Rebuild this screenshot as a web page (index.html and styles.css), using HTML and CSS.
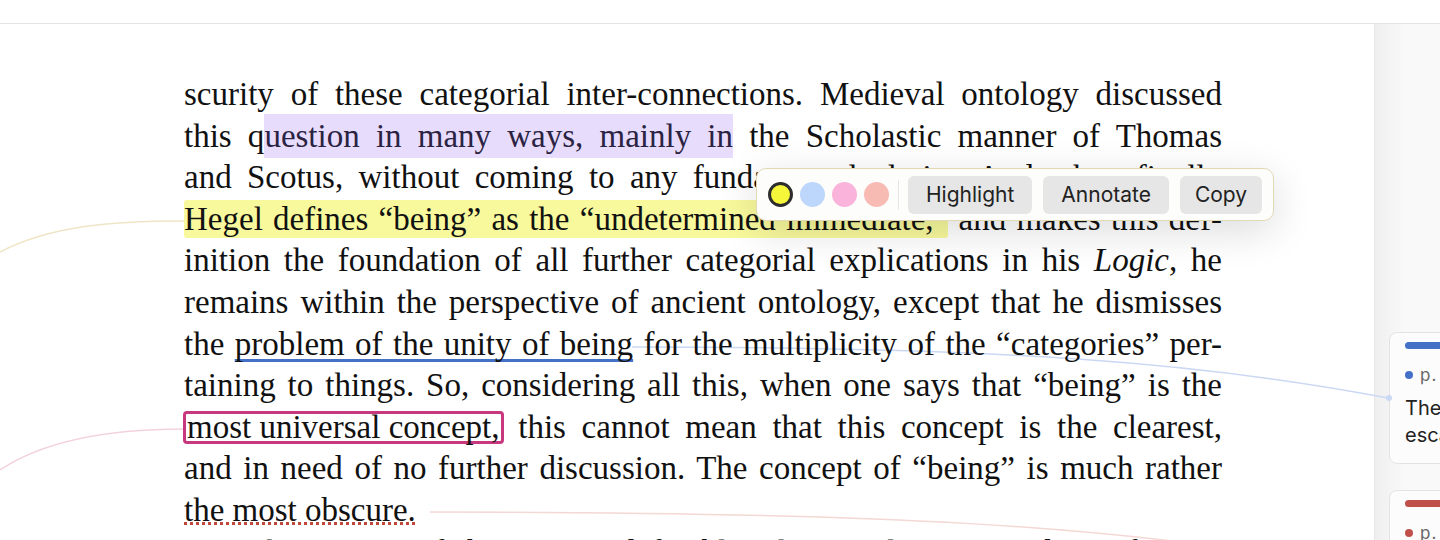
FILE: index.html
```html
<!DOCTYPE html>
<html lang="en">
<head>
    <meta charset="UTF-8">
    <meta name="viewport" content="width=device-width, initial-scale=1.0">
    <title>Reader</title>
    <link rel="stylesheet" href="styles.css">
</head>
<body>
    <div class="topbar"></div>

    <div class="workspace">
        <main class="reader">
            <div class="page">
                <p class="text">
                    <span class="ln">scurity of these categorial inter-connections. Medieval ontology discussed</span>
                    <span class="ln">this q<span class="hl-lavender">uestion in many ways, mainly in</span> the Scholastic manner of Thomas</span>
                    <span class="ln">and Scotus, without coming to any fundamental clarity. And when finally</span>
                    <span class="ln"><span class="hl-yellow">Hegel defines “being” as the “undetermined immediate,”</span> and makes this def-</span>
                    <span class="ln">inition the foundation of all further categorial explications in his <i>Logic</i>, he</span>
                    <span class="ln">remains within the perspective of ancient ontology, except that he dismisses</span>
                    <span class="ln">the <span class="ul-blue">problem of the unity of being</span> for the multiplicity of the “categories” per-</span>
                    <span class="ln">taining to things. So, considering all this, when one says that “being” is the</span>
                    <span class="ln"><span class="box-pink">most universal concept,</span> this cannot mean that this concept is the clearest,</span>
                    <span class="ln">and in need of no further discussion. The concept of “being” is much rather</span>
                    <span class="ln last"><span class="ul-dotted">the most obscure.</span></span>
                    <span class="ln indent">2. The concept of “being” is indefinable. This conclusion was drawn from its</span>
                </p>
            </div>

            <div class="popup">
                <div class="swatches">
                    <span class="swatch yellow active"></span>
                    <span class="swatch blue"></span>
                    <span class="swatch pink"></span>
                    <span class="swatch salmon"></span>
                </div>
                <span class="divider"></span>
                <button class="tool">Highlight</button>
                <button class="tool">Annotate</button>
                <button class="tool">Copy</button>
            </div>
        </main>

        <aside class="notes">
            <div class="note blue">
                <div class="bar"></div>
                <div class="meta"><span class="dot"></span>p. 3</div>
                <div class="body">The unity of being<br>escapes the categories</div>
            </div>
            <div class="note red">
                <div class="bar"></div>
                <div class="meta"><span class="dot"></span>p. 3</div>
            </div>
        </aside>
    </div>

    <!-- connectors from marks to margin notes -->
    <svg class="links" width="1440" height="540" viewBox="0 0 1440 540">
        <path d="M184 221 C110 221 50 226 0 252" stroke="#efe5c6"/>
        <path d="M184 429 C110 429 45 440 0 470" stroke="#f3d2df"/>
        <path d="M632 347 C1000 347 1200 362 1388 398" stroke="#cad8f4"/>
        <circle cx="1389" cy="398" r="3" fill="#cad8f4"/>
        <path d="M430 512 C850 512 1130 522 1389 575" stroke="#f3d8d4"/>
    </svg>
</body>
</html>
```

FILE: styles.css
```css
* {
    margin: 0;
    padding: 0;
    box-sizing: border-box;
}

body {
    width: 1440px;
    height: 540px;
    overflow: hidden;
    background: #ffffff;
    color: #111;
    font-family: 'Liberation Serif', serif;
    position: relative;
}

.topbar {
    height: 24px;
    border-bottom: 1px solid #e4e4e4;
    background: #ffffff;
}

.workspace {
    display: flex;
    height: 516px;
}

.reader {
    flex: 1;
    position: relative;
}

.page {
    position: relative;
    z-index: 1;
    padding: 50px 0 0 184px;
}

.text {
    width: 1038px;
    font-size: 33px;
    line-height: 41.6px;
}

.ln {
    display: block;
    height: 41.6px;
    text-align: justify;
    text-align-last: justify;
    white-space: nowrap;
}

.ln.last {
    text-align-last: left;
}

.ln.indent {
    padding-left: 30px;
}

.hl-lavender {
    background: #e7dcfc;
    color: #2b2342;
    padding: 4px 0;
}

.hl-yellow {
    background: #f8f99c;
    padding: 1px 0;
    border-radius: 3px;
}

.ul-blue {
    text-decoration: underline 3px #4470c6;
    text-decoration-skip-ink: none;
    text-underline-offset: 4px;
}

.box-pink {
    display: inline-block;
    line-height: 26px;
    padding: 0 1px 1px;
    margin: 0 -1px;
    border: 3px solid #c8387f;
    border-radius: 4px;
}

.ul-dotted {
    background: linear-gradient(to right, #c0483a 50%, transparent 50%) 0 calc(100% - 3px) / 6px 3px repeat-x;
}

/* selection toolbar */
.popup {
    position: absolute;
    left: 756px;
    top: 144px;
    z-index: 3;
    display: flex;
    align-items: center;
    height: 53px;
    padding: 0 11px;
    background: #fdfdfc;
    border: 1px solid #e2d8b4;
    border-radius: 10px;
    box-shadow: 0 10px 40px rgba(0, 0, 0, 0.14);
}

.swatches {
    display: flex;
    gap: 7px;
}

.swatch {
    width: 25px;
    height: 25px;
    border-radius: 50%;
}

.swatch.yellow { background: #f6f63b; }
.swatch.blue { background: #bcd6fc; }
.swatch.pink { background: #fab3da; }
.swatch.salmon { background: #f7bbb3; }

.swatch.active {
    border: 3px solid #2d2d2d;
}

.divider {
    width: 1px;
    height: 30px;
    background: #e6e6e6;
    margin: 0 9px;
}

.tool {
    height: 38px;
    padding: 0 18px;
    margin-right: 11px;
    border: none;
    border-radius: 6px;
    background: #e6e6e6;
    color: #222;
    font-family: 'Inter', 'Liberation Sans', sans-serif;
    font-size: 21px;
}

.tool:last-child {
    margin-right: 0;
    padding: 0 15px;
}

/* margin notes */
.notes {
    width: 66px;
    border-left: 1px solid #e6e6e6;
    background: linear-gradient(to right, #efefef, #f9f9f9 30px);
    padding: 308px 0 0 14px;
    overflow: hidden;
    display: flex;
    flex-direction: column;
    gap: 26px;
}

.note {
    width: 260px;
    flex-shrink: 0;
    background: #fcfcfc;
    border: 1px solid #e3e3e3;
    border-radius: 8px;
    padding: 9px 15px 14px;
    font-family: 'Inter', 'Liberation Sans', sans-serif;
}

.note .bar {
    height: 7px;
    border-radius: 4px;
}

.note.blue .bar { background: #4470c6; }
.note.red .bar { background: #c0504a; }

.meta {
    display: flex;
    align-items: center;
    gap: 7px;
    margin-top: 16px;
    font-size: 17px;
    letter-spacing: 1px;
    color: #666;
}

.dot {
    width: 8px;
    height: 8px;
    border-radius: 50%;
}

.note.blue .dot { background: #4470c6; }
.note.red .dot { background: #c0504a; }

.body {
    margin-top: 10px;
    font-size: 20px;
    line-height: 27px;
    color: #222;
}

.links {
    position: absolute;
    left: 0;
    top: 0;
    z-index: 0;
    pointer-events: none;
    fill: none;
    stroke-width: 1.5;
}

.links circle {
    stroke: none;
}
```
